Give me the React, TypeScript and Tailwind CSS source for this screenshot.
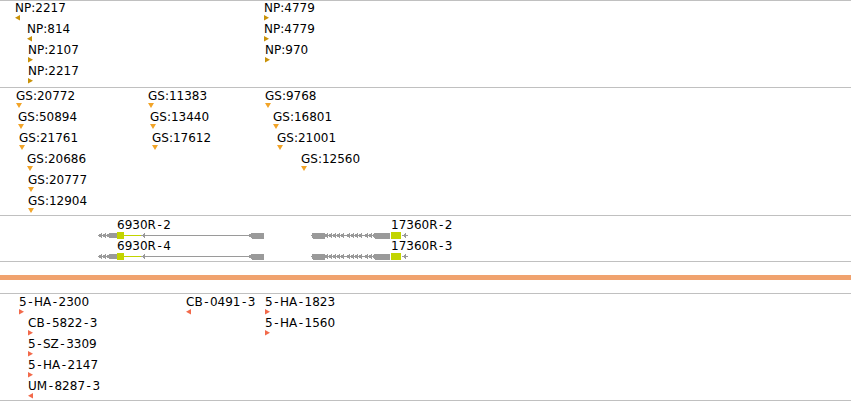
import React from 'react';

type Dir = 'left' | 'right' | 'down';
type Feat = [number, number, string, Dir];

const NP_COLOR = '#c99208';
const GS_COLOR = '#f2a428';
const STR_COLOR = '#f26a4b';
const GRAY = '#9a9a9a';
const LIME = '#c2d400';

const npFeatures: Feat[] = [
  [0, 15, 'NP:2217', 'left'],
  [1, 27, 'NP:814', 'left'],
  [2, 28, 'NP:2107', 'right'],
  [3, 28, 'NP:2217', 'right'],
  [0, 264, 'NP:4779', 'right'],
  [1, 264, 'NP:4779', 'right'],
  [2, 265, 'NP:970', 'right'],
];

const gsFeatures: Feat[] = [
  [0, 16, 'GS:20772', 'down'],
  [1, 18, 'GS:50894', 'down'],
  [2, 19, 'GS:21761', 'down'],
  [3, 27, 'GS:20686', 'down'],
  [4, 28, 'GS:20777', 'down'],
  [5, 28, 'GS:12904', 'down'],
  [0, 148, 'GS:11383', 'down'],
  [1, 150, 'GS:13440', 'down'],
  [2, 152, 'GS:17612', 'down'],
  [0, 265, 'GS:9768', 'down'],
  [1, 273, 'GS:16801', 'down'],
  [2, 277, 'GS:21001', 'down'],
  [3, 301, 'GS:12560', 'down'],
];

const strainFeatures: Feat[] = [
  [0, 19, '5-HA-2300', 'right'],
  [1, 28, 'CB-5822-3', 'right'],
  [2, 28, '5-SZ-3309', 'right'],
  [3, 28, '5-HA-2147', 'right'],
  [4, 28, 'UM-8287-3', 'left'],
  [0, 186, 'CB-0491-3', 'left'],
  [0, 265, '5-HA-1823', 'right'],
  [1, 265, '5-HA-1560', 'right'],
];

const Tri = ({ dir, color }: { dir: Dir; color: string }) => {
  if (dir === 'down') {
    return (
      <svg width="6" height="5" className="block">
        <polygon points="0,0 6,0 3,5" fill={color} />
      </svg>
    );
  }
  return (
    <svg width="5" height="6" className="block">
      {dir === 'left' ? (
        <polygon points="0,2.75 5,0 5,5.5" fill={color} />
      ) : (
        <polygon points="0,0 5,2.75 0,5.5" fill={color} />
      )}
    </svg>
  );
};

// the labels are drawn with slightly wider dashes
const Label = ({ text }: { text: string }) => {
  const parts = text.split('-');
  return (
    <span className="leading-[14px] whitespace-nowrap">
      {parts.map((p, i) => (
        <React.Fragment key={i}>
          {i > 0 && <span className="px-[1.5px]">-</span>}
          {p}
        </React.Fragment>
      ))}
    </span>
  );
};

const Track = ({ features, color, pad, className }: any) => {
  const rows = Math.max(...features.map((f: Feat) => f[0])) + 1;
  return (
    <div className={`flex flex-col border-t border-[#c0c0c0] ${pad} ${className}`}>
      {Array.from({ length: rows }).map((_, r) => (
        <div key={r} className="relative h-[21px] shrink-0">
          {features
            .filter((f: Feat) => f[0] === r)
            .map(([, x, label, dir]: Feat, i: number) => (
              <div key={i} className="absolute top-0 flex flex-col items-start" style={{ left: x }}>
                <Label text={label} />
                <Tri dir={dir} color={color} />
              </div>
            ))}
        </div>
      ))}
    </div>
  );
};

// gene glyphs, drawn relative to the gene start
const GeneA = () => (
  <svg width="167" height="7" className="block" shapeRendering="crispEdges">
    <rect x="0" y="3" width="19" height="1" fill={GRAY} />
    <polygon points="0,3.5 4,0.5 4,6.5" fill={GRAY} />
    <polygon points="4,3.5 8,0.5 8,6.5" fill={GRAY} />
    <polygon points="8,3.5 12,0.5 12,6.5" fill={GRAY} />
    <rect x="12" y="1" width="7" height="5" fill={GRAY} />
    <rect x="19" y="0" width="7" height="7" fill={LIME} />
    <rect x="26" y="3" width="18" height="1" fill={LIME} />
    <polygon points="43,3.5 47,1 47,6" fill={GRAY} />
    <rect x="47" y="3" width="105" height="1" fill={GRAY} />
    <polygon points="150,3.5 154,0.5 166,0.5 166,6.5 154,6.5" fill={GRAY} />
  </svg>
);

const chevrons = [13, 17, 21, 25, 29, 35, 39, 43, 47, 53, 57];

const GeneB = () => (
  <svg width="98" height="7" className="block" shapeRendering="crispEdges">
    <polygon points="0,3.5 2,0.5 14,0.5 14,6.5 2,6.5" fill={GRAY} />
    <rect x="14" y="3" width="49" height="1" fill={GRAY} />
    {chevrons.map((c) => (
      <polygon key={c} points={`${c},3.5 ${c + 4},0.5 ${c + 4},6.5`} fill={GRAY} />
    ))}
    <polygon points="61,3.5 64,0.5 79,0.5 79,6.5 64,6.5" fill={GRAY} />
    <rect x="80" y="0" width="10" height="7" fill={LIME} />
    <polygon points="91,3.5 95,1 95,6" fill={GRAY} />
    <rect x="95" y="3" width="2" height="1" fill={GRAY} />
  </svg>
);

const genes = [
  { x: 98, offset: 19, labels: ['6930R-2', '6930R-4'], glyph: <GeneA /> },
  { x: 311, offset: 80, labels: ['17360R-2', '17360R-3'], glyph: <GeneB /> },
];

export default function App() {
  return (
    <div className="w-[851px] h-[402px] bg-white overflow-hidden text-black text-[12px] font-['DejaVu_Sans',sans-serif]">
      <Track features={npFeatures} color={NP_COLOR} pad="pt-0" className="h-[87px]" />
      <Track features={gsFeatures} color={GS_COLOR} pad="pt-px" className="h-[128px]" />

      <div className="flex flex-col h-[47px] pt-[2px] border-y border-[#c0c0c0]">
        {[0, 1].map((r) => (
          <div key={r} className="relative h-[21px] shrink-0">
            {genes.map((g) => (
              <div key={g.x} className="absolute top-0 flex flex-col items-start" style={{ left: g.x }}>
                <span className="leading-[14px]" style={{ paddingLeft: g.offset }}>
                  <Label text={g.labels[r]} />
                </span>
                {g.glyph}
              </div>
            ))}
          </div>
        ))}
      </div>

      <div className="flex flex-col py-[13px]">
        <div className="h-[5px] bg-[#f0a26e]" />
      </div>

      <Track features={strainFeatures} color={STR_COLOR} pad="pt-px" className="h-[108px] border-b" />
    </div>
  );
}
